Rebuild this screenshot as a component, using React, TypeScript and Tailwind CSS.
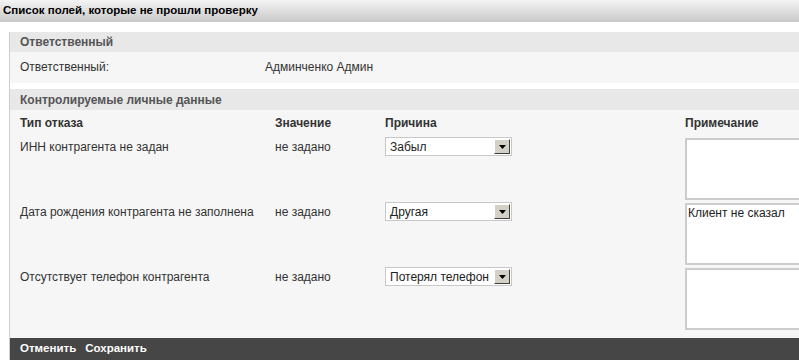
import React from "react";

const font = { fontFamily: '"Liberation Sans", Arial, sans-serif' };

function FakeSelect({ value }: { value: string }) {
  return (
    <div className="flex h-[19px] w-[127px] items-stretch border border-[#c8c8c8] bg-white">
      <div className="flex flex-1 items-center overflow-hidden whitespace-nowrap pl-[4px] text-[12px] text-[#222]">
        {value}
      </div>
      <div className="m-[1px] flex w-[16px] shrink-0 items-center justify-center border border-t-white border-l-white border-r-[#404040] border-b-[#404040] bg-[#d4d0c8]">
        <svg width="7" height="4" viewBox="0 0 7 4">
          <path d="M0 0h7L3.5 4z" fill="#000" />
        </svg>
      </div>
    </div>
  );
}

function Row({
  label,
  value,
  reason,
  note,
}: {
  label: string;
  value: string;
  reason: string;
  note?: string;
}) {
  return (
    <div className="flex h-[65px] text-[12px] text-[#333]">
      <div className="w-[255px] shrink-0 whitespace-nowrap pt-[5px]">{label}</div>
      <div className="w-[110px] shrink-0 pt-[5px]">{value}</div>
      <div className="w-[300px] shrink-0 pt-[4px]">
        <FakeSelect value={reason} />
      </div>
      <div className="shrink-0 pt-[5px]">
        <div className="h-[62px] w-[170px] border-2 border-[#cccccc] bg-white pl-[1px] text-[12px] leading-[16px] text-[#222]">
          {note}
        </div>
      </div>
    </div>
  );
}

export default function App() {
  return (
    <div className="h-[360px] w-[799px] overflow-hidden bg-white" style={font}>
      <div className="flex h-[22px] items-center bg-gradient-to-b from-[#f4f4f4] to-[#c9c9c9] pl-[3px] text-[11.5px] font-bold text-black">
        Список полей, которые не прошли проверку
      </div>
      <div className="ml-[9px] mt-[10px] w-[850px] border-l border-[#cccccc]">
        <div className="flex h-[20px] items-center bg-[#e8e8e8] pl-[10px] text-[12px] font-bold text-[#555]">
          Ответственный
        </div>
        <div className="flex h-[31px] items-start bg-[#f6f6f6] pl-[10px] pt-[6px] text-[12px] text-[#333]">
          <div className="w-[245px] shrink-0">Ответственный:</div>
          <div>Админченко Админ</div>
        </div>
        <div className="h-[6px] bg-white" />
        <div className="flex h-[21px] items-center bg-[#e8e8e8] pl-[10px] text-[12px] font-bold text-[#555]">
          Контролируемые личные данные
        </div>
        <div className="h-[228px] overflow-hidden bg-[#f6f6f6] pl-[10px]">
          <div className="flex h-[23px] items-end pb-[1px] text-[12px] font-bold text-[#333]">
            <div className="w-[255px] shrink-0">Тип отказа</div>
            <div className="w-[110px] shrink-0">Значение</div>
            <div className="w-[300px] shrink-0">Причина</div>
            <div className="shrink-0">Примечание</div>
          </div>
          <Row label="ИНН контрагента не задан" value="не задано" reason="Забыл" />
          <Row
            label="Дата рождения контрагента не заполнена"
            value="не задано"
            reason="Другая"
            note="Клиент не сказал"
          />
          <Row
            label="Отсутствует телефон контрагента"
            value="не задано"
            reason="Потерял телефон"
          />
        </div>
        <div className="flex h-[22px] items-center gap-[9px] bg-[#464646] pl-[10px] text-[11.5px] font-bold text-white">
          <span>Отменить</span>
          <span>Сохранить</span>
        </div>
      </div>
    </div>
  );
}
